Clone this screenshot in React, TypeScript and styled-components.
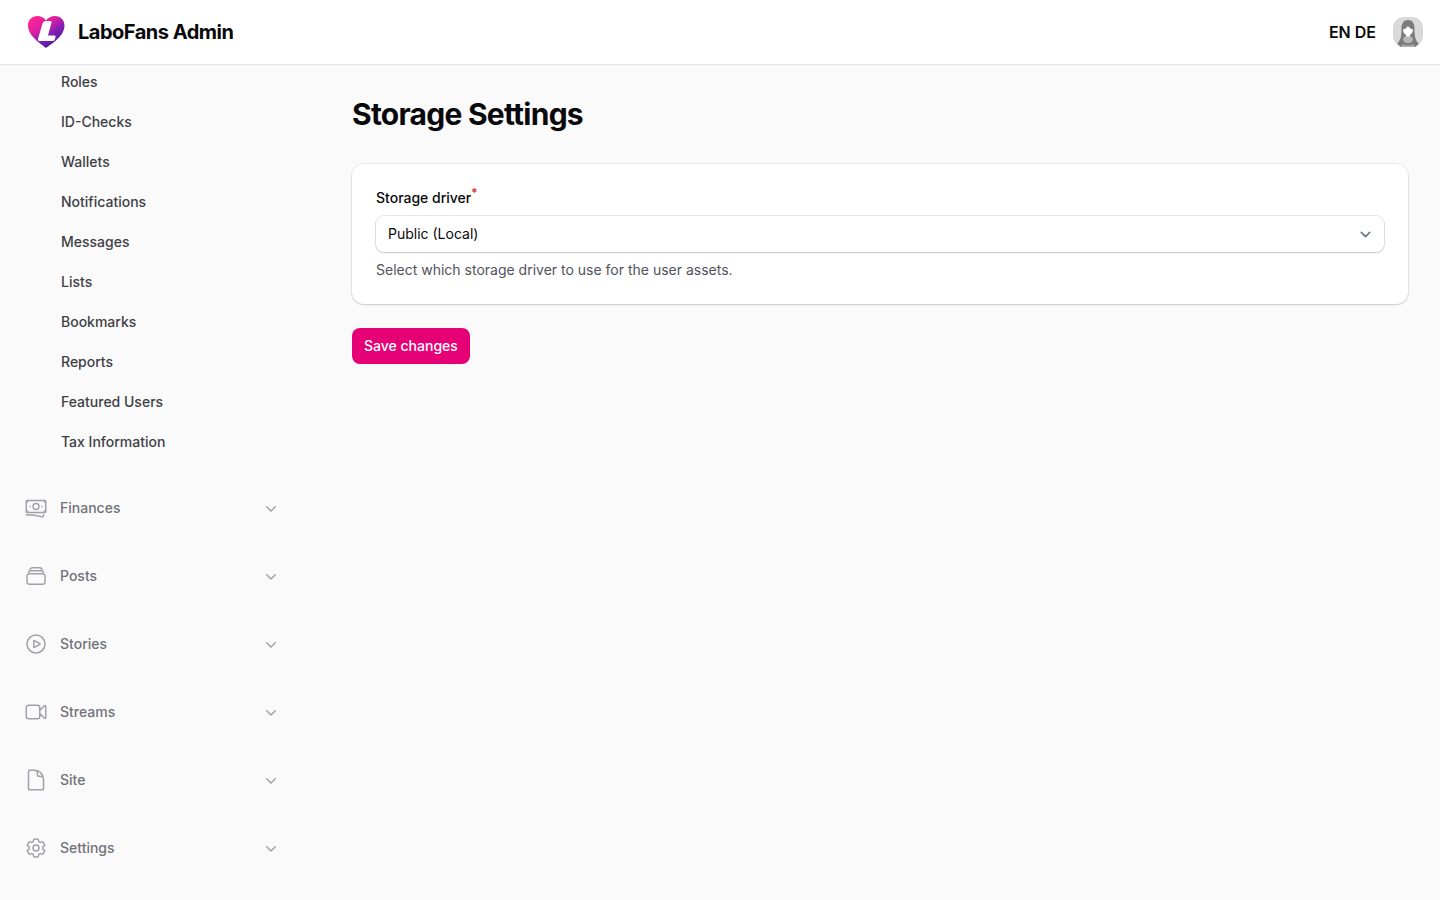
import React from 'react';
import styled, { createGlobalStyle } from 'styled-components';
import {
  HiOutlineBanknotes,
  HiOutlineCog6Tooth,
  HiOutlineDocument,
  HiOutlinePlayCircle,
  HiOutlineRectangleStack,
  HiOutlineVideoCamera,
} from 'react-icons/hi2';

const GlobalStyle = createGlobalStyle`
  *, *::before, *::after { box-sizing: border-box; }
  body {
    margin: 0;
    background: #fafafa;
    color: #09090b;
    font-family: Inter, "Liberation Sans", sans-serif;
    font-size: 14px;
    line-height: 20px;
    font-optical-sizing: none;
  }
  button, select { font: inherit; color: inherit; }
`;

const Page = styled.div`
  display: flex;
  flex-direction: column;
  min-height: 100vh;
`;

const TopBar = styled.header`
  display: flex;
  align-items: center;
  justify-content: space-between;
  height: 64px;
  padding: 0 16px 0 24px;
  background: #fff;
  box-shadow: 0 0 0 1px rgba(9, 9, 11, 0.05), 0 1px 2px rgba(0, 0, 0, 0.05);
`;

const Brand = styled.a`
  display: flex;
  align-items: center;
  gap: 10px;
  color: inherit;
  font-size: 20px;
  line-height: 28px;
  font-weight: 700;
  letter-spacing: -0.025em;
  text-decoration: none;
`;

const UserArea = styled.div`
  display: flex;
  align-items: center;
  gap: 16px;
`;

const Languages = styled.nav`
  font-size: 16px;
  line-height: 24px;
  font-weight: 600;
`;

const LanguageLink = styled.a`
  color: inherit;
  text-decoration: none;
`;

const AvatarButton = styled.button`
  display: flex;
  width: 32px;
  height: 32px;
  padding: 0;
  border: 0;
  border-radius: 50%;
  background: none;
`;

const Body = styled.div`
  display: flex;
  flex: 1;
`;

const Sidebar = styled.nav`
  display: flex;
  flex-direction: column;
  gap: 28px;
  width: 320px;
  flex-shrink: 0;
  padding: 0 24px 32px 16px;
`;

const SubList = styled.ul`
  display: flex;
  flex-direction: column;
  gap: 4px;
  margin: 0;
  padding: 0;
  list-style: none;
`;

const SubLink = styled.a`
  display: block;
  padding: 8px 8px 8px 45px;
  color: #3f3f46;
  font-weight: 500;
  text-decoration: none;
`;

const GroupButton = styled.button`
  display: flex;
  align-items: center;
  gap: 12px;
  height: 40px;
  padding: 8px 15px 8px 8px;
  border: 0;
  background: none;
  color: #71717a;
  font-weight: 500;
  text-align: left;

  svg { color: #a1a1aa; }
`;

const GroupLabel = styled.span`
  flex: 1;
`;

const Main = styled.main`
  display: flex;
  flex: 1;
  flex-direction: column;
  gap: 32px;
  min-width: 0;
  padding: 32px;
`;

const Title = styled.h1`
  margin: 0;
  font-size: 30px;
  line-height: 36px;
  font-weight: 700;
  letter-spacing: -0.025em;
`;

const Form = styled.form`
  display: flex;
  flex-direction: column;
  align-items: flex-start;
  gap: 24px;
`;

const Card = styled.section`
  display: flex;
  flex-direction: column;
  gap: 8px;
  width: 100%;
  padding: 24px;
  border-radius: 12px;
  background: #fff;
  box-shadow: 0 0 0 1px rgba(9, 9, 11, 0.05), 0 1px 2px rgba(0, 0, 0, 0.15);
`;

const Label = styled.label`
  font-weight: 500;
`;

const Required = styled.sup`
  color: #dc2626;
  font-size: 12px;
  line-height: 0;
`;

const SelectBox = styled.div`
  display: grid;
  align-items: center;
  border-radius: 8px;
  background: #fff;
  box-shadow: 0 0 0 1px rgba(9, 9, 11, 0.1), 0 1px 2px rgba(0, 0, 0, 0.15);

  > * { grid-area: 1 / 1; }
  > svg { justify-self: end; margin-right: 8px; pointer-events: none; }
`;

const Select = styled.select`
  width: 100%;
  height: 36px;
  padding: 0 32px 0 12px;
  border: 0;
  border-radius: 8px;
  background: transparent;
  appearance: none;
`;

const Hint = styled.p`
  margin: 0;
  color: #52525b;
`;

const SaveButton = styled.button`
  padding: 8px 12px;
  border: 0;
  border-radius: 8px;
  background: #e60076;
  color: #fff;
  font-weight: 500;
`;

const Logo = () => (
  <svg width="44" height="36" viewBox="0 0 44 36" aria-hidden="true">
    <defs>
      <linearGradient id="heart" x1="0.1" y1="0" x2="0.8" y2="0.9">
        <stop offset="0.1" stopColor="#ff2394" />
        <stop offset="0.4" stopColor="#d81fa4" />
        <stop offset="0.7" stopColor="#7d1fb4" />
        <stop offset="1" stopColor="#4a1a8c" />
      </linearGradient>
    </defs>
    <path
      d="M22 34C18 30.500 4 22.500 4 11.500C4 5.500 8.500 2 13.200 2C17 2 20 3.600 22 6.500C24 3.600 27.500 2 31 2C36.500 2 40.500 6 40.500 11.500C40.500 22.500 26.500 30.500 22 34Z"
      fill="url(#heart)"
    />
    <path
      d="M21.500 7H26.500Q28 7 27.500 8.500L24 21.500H30.500Q32 21.500 31.500 23L31 25Q30.500 27 28.500 27H15.500Q13.500 27 14 25L18.500 9.500Q19.200 7 21.500 7Z"
      fill="#fff"
    />
  </svg>
);

const Avatar = () => (
  <svg width="32" height="32" viewBox="0 0 32 32" aria-hidden="true">
    <rect x="1" y="1" width="30" height="30" rx="11" fill="#d9d9d9" />
    <path d="M16 4c-5 0-6.500 4-6.500 9 0 6-.5 11-4 14.500 1 2 3 3.500 5 3.500h11c2 0 4-1.500 5-3.500-3.500-3.500-4-8.500-4-14.500 0-5-1.500-9-6.500-9Z" fill="#7c7c7c" />
    <path d="M14 17h4v4h-4Z" fill="#e8e8e8" />
    <path d="M11 24c0-2.500 1.500-3.500 3-3.500 1 1 3 1 4 0 1.500 0 3 1 3 3.500-1 2.500-3 3-5 3s-4-.5-5-3Z" fill="#b8b8b8" />
    <path d="M10 28c3 1.500 9 1.500 12 0v3H10Z" fill="#a8a8a8" />
    <path d="M11 13.500c2-.5 4-2 5-3.500 1 1.500 3 3 5 3.500 0 3-2.500 6-5 6s-5-3-5-6Z" fill="#fff" />
  </svg>
);

const GroupChevron = () => (
  <svg width="20" height="20" viewBox="0 0 20 20" fill="currentColor" aria-hidden="true">
    <path
      fillRule="evenodd"
      clipRule="evenodd"
      d="M5.220 8.220a.75.75 0 0 1 1.060 0L10 11.940l3.720-3.720a.75.75 0 1 1 1.060 1.060l-4.250 4.250a.75.75 0 0 1-1.060 0L5.220 9.280a.75.75 0 0 1 0-1.060Z"
    />
  </svg>
);

const SelectChevron = () => (
  <svg width="21" height="21" viewBox="0 0 20 20" fill="none" stroke="#6b7280" strokeWidth="1.5" strokeLinecap="round" strokeLinejoin="round" aria-hidden="true">
    <path d="M6 8l4 4 4-4" />
  </svg>
);

const userPages = [
  'Roles', 'ID-Checks', 'Wallets', 'Notifications', 'Messages',
  'Lists', 'Bookmarks', 'Reports', 'Featured Users', 'Tax Information',
];

const groups = [
  { label: 'Finances', Icon: HiOutlineBanknotes },
  { label: 'Posts', Icon: HiOutlineRectangleStack },
  { label: 'Stories', Icon: HiOutlinePlayCircle },
  { label: 'Streams', Icon: HiOutlineVideoCamera },
  { label: 'Site', Icon: HiOutlineDocument },
  { label: 'Settings', Icon: HiOutlineCog6Tooth },
];

export default function App() {
  return (
    <Page>
      <GlobalStyle />
      <TopBar>
        <Brand href="#home"><Logo />LaboFans Admin</Brand>
        <UserArea>
          <Languages aria-label="Language">
            <LanguageLink href="#en">EN</LanguageLink>{' '}
            <LanguageLink href="#de">DE</LanguageLink>
          </Languages>
          <AvatarButton type="button" aria-label="User menu"><Avatar /></AvatarButton>
        </UserArea>
      </TopBar>
      <Body>
        <Sidebar aria-label="Admin">
          <SubList>
            {userPages.map((page) => (
              <li key={page}><SubLink href="#page">{page}</SubLink></li>
            ))}
          </SubList>
          {groups.map(({ label, Icon }) => (
            <GroupButton type="button" key={label} aria-expanded={false}>
              <Icon size={24} />
              <GroupLabel>{label}</GroupLabel>
              <GroupChevron />
            </GroupButton>
          ))}
        </Sidebar>
        <Main>
          <Title>Storage Settings</Title>
          <Form onSubmit={(event) => event.preventDefault()}>
            <Card>
              <Label htmlFor="driver">Storage driver<Required>*</Required></Label>
              <SelectBox>
                <Select id="driver" aria-describedby="driver-hint">
                  <option>Public (Local)</option>
                </Select>
                <SelectChevron />
              </SelectBox>
              <Hint id="driver-hint">Select which storage driver to use for the user assets.</Hint>
            </Card>
            <SaveButton type="submit">Save changes</SaveButton>
          </Form>
        </Main>
      </Body>
    </Page>
  );
}
